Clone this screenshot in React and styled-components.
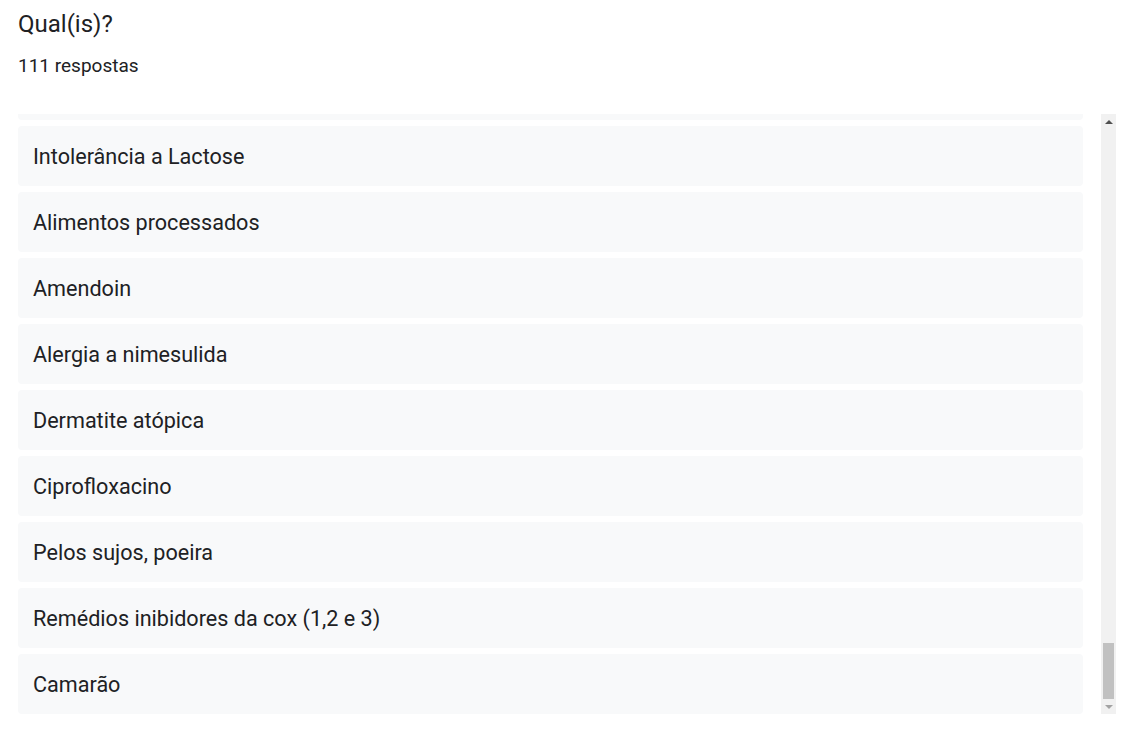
import React, { useEffect, useRef, useState } from "react";
import styled, { createGlobalStyle } from "styled-components";

const GlobalStyle = createGlobalStyle`
  html, body { margin: 0; padding: 0; background: #ffffff; }
  body { font-family: Roboto, "Noto Sans", Arial, sans-serif; color: #202124; }
`;

const Page = styled.div`
  padding: 8px 12px 20px 18px;
  display: flex;
  flex-direction: column;
`;

const Title = styled.h2`
  margin: 0;
  font-family: Roboto, Arial, sans-serif;
  font-weight: 400;
  font-size: 24px;
  line-height: 32px;
  color: #202124;
`;

const Count = styled.div`
  margin-top: 14px;
  font-size: 19px;
  line-height: 24px;
  color: #202124;
`;

const Frame = styled.div`
  margin-top: 36px;
  height: 600px;
  display: flex;
  gap: 18px;
`;

const List = styled.div`
  flex: 1;
  min-width: 0;
  overflow-y: scroll;
  scrollbar-width: none;
  display: flex;
  flex-direction: column;
  gap: 6px;
  &::-webkit-scrollbar { display: none; }
`;

const Item = styled.div`
  flex: 0 0 60px;
  display: flex;
  align-items: center;
  padding: 0 15px;
  background: #f8f9fa;
  border-radius: 4px;
  font-size: 21.6px;
  color: #202124;
`;

const Bar = styled.div`
  flex: 0 0 15px;
  display: flex;
  flex-direction: column;
  background: #f1f1f1;
`;

const ArrowBox = styled.div`
  flex: 0 0 15px;
  display: flex;
  align-items: center;
  justify-content: center;
`;

const Triangle = styled.div`
  width: 0;
  height: 0;
  border-left: 4px solid transparent;
  border-right: 4px solid transparent;
  ${(p) =>
    p.$up
      ? `border-bottom: 4px solid ${p.$color};`
      : `border-top: 4px solid ${p.$color};`}
`;

const Track = styled.div`
  flex: 1;
  padding: 0 2px;
  display: flex;
  flex-direction: column;
`;

const Thumb = styled.div`
  background: #c1c1c1;
`;

const base = [
  "Dipirona", "Poeira", "Lactose", "Frutos do mar", "Penicilina", "Ácaros",
  "Glúten", "Pólen", "Picada de inseto", "Amoxicilina", "Corante", "Mofo",
  "Ovo", "Leite", "Pelo de gato", "Ibuprofeno", "Rinite alérgica", "Sulfa",
];

const visible = [
  "Intolerância a Lactose",
  "Alimentos processados",
  "Amendoin",
  "Alergia a nimesulida",
  "Dermatite atópica",
  "Ciprofloxacino",
  "Pelos sujos, poeira",
  "Remédios inibidores da cox (1,2 e 3)",
  "Camarão",
];

const answers = [
  ...Array.from({ length: 83 }, (_, i) => base[i % base.length]),
  ...visible,
];

const TRACK = 570;

export default function App() {
  const ref = useRef(null);
  const [thumb, setThumb] = useState({ top: 514, height: 56 });

  const update = () => {
    const el = ref.current;
    if (!el) return;
    const h = Math.max(18, (TRACK * el.clientHeight) / el.scrollHeight);
    const max = el.scrollHeight - el.clientHeight;
    const top = max > 0 ? (el.scrollTop / max) * (TRACK - h) : 0;
    setThumb({ top, height: h });
  };

  useEffect(() => {
    if (ref.current) ref.current.scrollTop = ref.current.scrollHeight;
    update();
  }, []);

  return (
    <>
      <GlobalStyle />
      <Page>
        <Title>Qual(is)?</Title>
        <Count>111 respostas</Count>
        <Frame>
          <List ref={ref} onScroll={update}>
            {answers.map((a, i) => (
              <Item key={i}>{a}</Item>
            ))}
          </List>
          <Bar>
            <ArrowBox>
              <Triangle $up $color="#505050" />
            </ArrowBox>
            <Track>
              <Thumb style={{ marginTop: thumb.top, height: thumb.height }} />
            </Track>
            <ArrowBox>
              <Triangle $color="#a3a3a3" />
            </ArrowBox>
          </Bar>
        </Frame>
      </Page>
    </>
  );
}
